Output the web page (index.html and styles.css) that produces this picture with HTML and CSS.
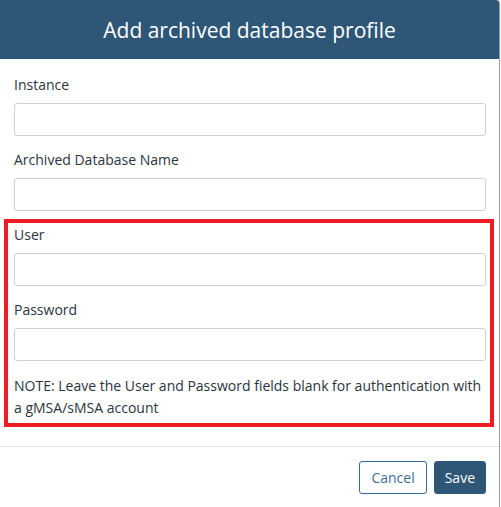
FILE: index.html
```html
<!DOCTYPE html>
<html>
<head>
<meta charset="utf-8">
<link rel="stylesheet" href="styles.css">
</head>
<body>
<div class="modal">
  <div class="modal-header">
    <h1 class="modal-title">Add archived database profile</h1>
  </div>
  <div class="modal-body">
    <div class="form-group">
      <label class="form-label">Instance</label>
      <input class="form-input" type="text">
    </div>
    <div class="form-group">
      <label class="form-label">Archived Database Name</label>
      <input class="form-input" type="text">
    </div>
    <div class="form-group">
      <label class="form-label">User</label>
      <input class="form-input" type="text">
    </div>
    <div class="form-group">
      <label class="form-label">Password</label>
      <input class="form-input" type="password">
    </div>
    <p class="note">NOTE: Leave the User and Password fields blank for authentication with a gMSA/sMSA account</p>
  </div>
  <div class="modal-footer">
    <button class="btn btn-outline">Cancel</button>
    <button class="btn btn-primary">Save</button>
  </div>
  <div class="highlight"></div>
</div>
</body>
</html>
```
FILE: styles.css
```css
html, body {
  margin: 0;
  padding: 0;
  background: #ffffff;
}
body {
  font-family: "Open Sans", "Noto Sans", sans-serif;
  color: #2b3440;
  font-size: 14px;
}
.modal {
  position: relative;
  width: 500px;
  height: 507px;
  box-sizing: border-box;
  border-right: 1px solid #9a9a9a;
  border-top-right-radius: 4px;
  background: #fff;
  display: flex;
  flex-direction: column;
}
.modal-header {
  background: #2d5677;
  height: 59px;
  display: flex;
  align-items: center;
  justify-content: center;
  border-top-right-radius: 3px;
}
.modal-title {
  margin: 0;
  color: #ffffff;
  font-weight: 400;
  font-size: 21px;
  line-height: 28px;
}
.modal-body {
  padding: 16px 13px 12px 14px;
  display: flex;
  flex-direction: column;
}
.form-group {
  display: flex;
  flex-direction: column;
  margin-bottom: 14px;
}
.form-label {
  line-height: 20px;
  margin-bottom: 8px;
  color: #2b3440;
}
.form-input {
  height: 33px;
  box-sizing: border-box;
  border: 1px solid #cdd1d6;
  border-radius: 3px;
  padding: 6px 10px;
  font: inherit;
  outline: none;
}
.note {
  margin: 0 0 15px 0;
  line-height: 22px;
  color: #2b3440;
}
.modal-footer {
  border-top: 1px solid #e5e5e5;
  padding: 14px 13px 13px 14px;
  display: flex;
  justify-content: flex-end;
  gap: 7px;
}
.btn {
  height: 33px;
  box-sizing: border-box;
  border-radius: 3px;
  font-family: inherit;
  font-size: 14px;
  padding: 0 10px;
  cursor: pointer;
}
.btn-outline {
  background: #fff;
  border: 1px solid #3a6b93;
  color: #3b6e96;
  padding: 0 11px;
}
.btn-primary {
  background: #2d5677;
  border: 1px solid #2d5677;
  color: #fff;
}
.highlight {
  position: absolute;
  left: 4px;
  top: 219px;
  width: 490px;
  height: 208px;
  box-sizing: border-box;
  border: 4px solid #ee1c25;
  pointer-events: none;
}
```
